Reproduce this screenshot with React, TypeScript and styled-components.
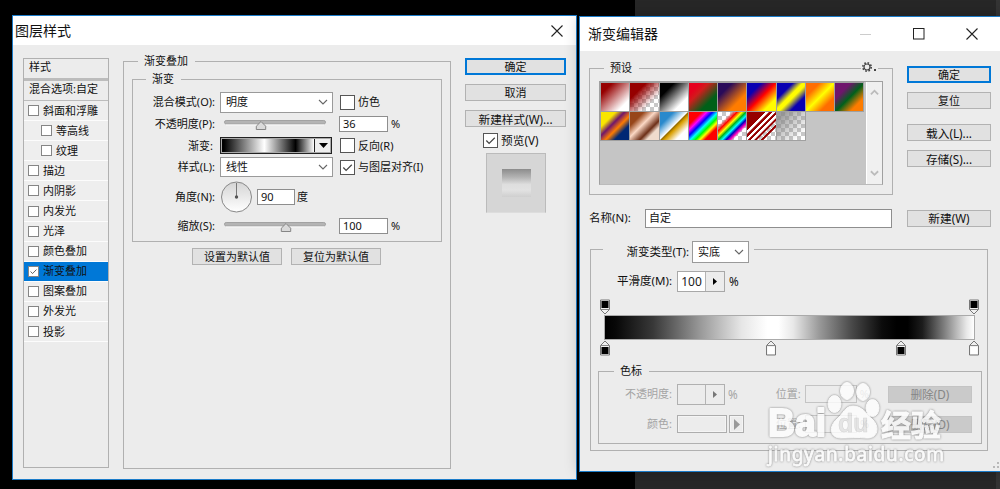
import React from 'react';
import styled, { createGlobalStyle, css } from 'styled-components';

const Global = createGlobalStyle`
  * { box-sizing: border-box; }
  body { margin: 0; background: #000; }
`;

const Desktop = styled.main`
  position: relative;
  width: 1000px;
  height: 489px;
  overflow: hidden;
  background: linear-gradient(90deg, #000 635px, #272727 635px, #272727 996px, #343434 996px);
  font: 11px/14px 'Noto Sans', 'Noto Sans CJK SC', sans-serif;
  color: #111;
  white-space: nowrap;
`;

const Window = styled.section<{ $x: number; $y: number; $w: number; $h: number }>`
  position: absolute;
  left: ${p => p.$x}px;
  top: ${p => p.$y}px;
  width: ${p => p.$w}px;
  height: ${p => p.$h}px;
  border: 1px solid #1c7cc9;
  background: #ececec;
  box-shadow: 0 0 14px rgba(0, 0, 0, 0.22);
`;

const TitleBar = styled.header<{ $h: number }>`
  height: ${p => p.$h}px;
  display: flex;
  align-items: center;
  background: #fff;
`;

const Title = styled.h1<{ $indent: number }>`
  margin: 0;
  padding-left: ${p => p.$indent}px;
  flex: 1;
  font-size: 14px;
  line-height: 20px;
  font-weight: 400;
`;

const Body = styled.div`
  display: flex;
  align-items: flex-start;
`;

const Sidebar = styled.nav`
  width: 86px;
  height: 410px;
  margin: 13px 14px 0 10px;
  border: 1px solid #b0b0b0;
`;

const SideHead = styled.div<{ $double?: boolean }>`
  height: ${p => (p.$double ? 22 : 20)}px;
  padding-left: 5px;
  line-height: 15px;
  border-bottom: ${p => (p.$double ? '3px' : '1px')} solid #bcbcbc;
`;

const StyleItem = styled.div<{ $nested?: boolean; $active?: boolean }>`
  height: 20.1px;
  display: flex;
  align-items: center;
  gap: 4px;
  padding-left: ${p => (p.$nested ? 17 : 4)}px;
  background: ${p => (p.$active ? '#0078d7' : '#eee')};
  border-bottom: 1px solid #fcfcfc;
`;

const Check = styled.span<{ $size: number }>`
  width: ${p => p.$size}px;
  height: ${p => p.$size}px;
  flex: none;
  display: flex;
  border: 1px solid ${p => (p.$size > 12 ? '#555' : '#858585')};
  background: #fff;
  svg { width: 100%; height: 100%; }
`;

const Group = styled.fieldset<{ $w: number; $h: number }>`
  width: ${p => p.$w}px;
  height: ${p => p.$h}px;
  min-width: 0;
  margin: 0;
  padding: 0;
  border: 1px solid #b0b0b0;
`;

const Legend = styled.legend<{ $at: number }>`
  margin-left: ${p => p.$at}px;
  padding: 0 7px 0 6px;
  height: 14px;
  line-height: 14px;
`;

const StylePane = styled.div`
  margin-top: 9px;
`;

const Inner = styled.div`
  padding: 4px 0 0 8px;
`;

const Row = styled.div<{ $h: number }>`
  height: ${p => p.$h}px;
  display: flex;
  align-items: center;
`;

const Label = styled.span<{ $w: number; $gap?: number; $left?: boolean; $big?: boolean }>`
  width: ${p => p.$w}px;
  margin-right: ${p => p.$gap ?? 5}px;
  flex: none;
  display: flex;
  justify-content: ${p => (p.$left ? 'flex-start' : 'flex-end')};
  ${p => p.$big && css`font-size: 11.5px;`}
`;

const Rows = styled.div`
  padding-top: 5px;
`;

const Control = styled.div`
  width: 113px;
  flex: none;
  display: flex;
  align-items: center;
`;

const SelectBox = styled.div<{ $w: number; $h: number }>`
  width: ${p => p.$w}px;
  height: ${p => p.$h}px;
  display: flex;
  align-items: center;
  justify-content: space-between;
  padding: 0 4px 0 5px;
  border: 1px solid #9a9a9a;
  background: #fff;
`;

const Field = styled.div<{ $w: number; $h?: number; $faint?: boolean }>`
  width: ${p => p.$w}px;
  height: ${p => p.$h ?? 16}px;
  flex: none;
  display: flex;
  align-items: center;
  padding-left: 3px;
  border: 1px solid ${p => (p.$faint ? '#c4c4c4' : '#8e8e8e')};
  background: ${p => (p.$faint ? '#ececec' : '#fff')};
`;

const Unit = styled.span<{ $gap?: number }>`
  margin-left: ${p => p.$gap ?? 3}px;
`;

const CheckLabel = styled.label<{ $gap?: number }>`
  display: flex;
  align-items: center;
  gap: 3px;
  margin-left: ${p => p.$gap ?? 7}px;
`;

const GradientBox = styled.div`
  width: 112px;
  height: 17px;
  display: flex;
  border: 1px solid #222;
  outline: 1px solid #aaa;
  outline-offset: -2px;
  background: #eee;
`;

const GradientFill = styled.div`
  flex: 1;
  margin: 1px 0 1px 1px;
  background: linear-gradient(90deg, #000 2%, #fff 46%, #000 80%, #fff);
  border-right: 1px solid #222;
`;

const GradientArrow = styled.div`
  width: 16px;
  display: flex;
  align-items: center;
  justify-content: center;
`;

const Push = styled.button<{ $w: number; $top?: number; $primary?: boolean; $off?: boolean; $h?: number }>`
  width: ${p => p.$w}px;
  height: ${p => p.$h ?? 17}px;
  flex: none;
  margin: ${p => p.$top ?? 0}px 0 0;
  padding: 0;
  display: flex;
  align-items: center;
  justify-content: center;
  border: ${p => (p.$primary ? '2px solid #0078d7' : '1px solid #b2b2b2')};
  background: ${p => (p.$off ? '#cacaca' : '#e1e1e1')};
  ${p => p.$off && css`border-color: #c4c4c4;`}
  color: ${p => (p.$off ? '#858585' : '#111')};
  font: inherit;
  line-height: 12px;
`;

const ButtonPair = styled.div`
  display: flex;
  gap: 9px;
  margin: 6px 0 0 60px;
`;

const Actions = styled.aside`
  width: 101px;
  margin: 13px 0 0 14px;
  display: flex;
  flex-direction: column;
`;

const Wide = styled.span`
  font-size: 11.7px;
`;

const Thumb = styled.div`
  width: 60px;
  height: 60px;
  margin: 0 0 0 21px;
  display: flex;
  align-items: center;
  justify-content: center;
  border: 1px solid #bbb;
  border-bottom-color: #ddd;
  background: #d6d6d6;
`;

const ThumbFill = styled.div`
  width: 29px;
  height: 28px;
  background: linear-gradient(#8c8c8c, #b4b4b4 30%, #dedede 55%, #e2e2e2 75%, #cfcfcf);
`;

const Caption = styled.span<{ $w: number }>`
  width: ${p => p.$w}px;
  display: flex;
  justify-content: center;
`;

const EditorTop = styled.div`
  display: flex;
  padding: 10px 0 0 9px;
`;

const Gear = styled.div`
  width: 17px;
  margin: -14px 14px 0 auto;
  height: 14px;
  background: #ececec;
  display: flex;
`;

const Presets = styled.div`
  width: 284px;
  height: 104px;
  margin: 6px 0 0 9px;
  display: flex;
  justify-content: space-between;
  border: 1px solid #a0a0a0;
  border-bottom-color: #bbb;
  background: #c5c5c5;
`;

const Swatches = styled.div`
  display: grid;
  grid-template-columns: repeat(9, 28.25px);
  grid-auto-rows: 28.2px;
  gap: 1px;
  align-content: start;
  margin: 1px;
  height: 59px;
`;

const Swatch = styled.div<{ $fill: string }>`
  background: ${p => p.$fill}, repeating-conic-gradient(#c8c8c8 0 25%, #fff 0 50%) 0 0 / 8px 8px;
  box-shadow: 0 0 0 1px #a0a0a0;
`;

const ScrollBar = styled.div`
  width: 16px;
  display: flex;
  flex-direction: column;
  justify-content: space-between;
  align-items: center;
  padding: 7px 0;
  border-left: 1px solid #fff;
  background: #f0f0f0;
`;

const EditorActions = styled.div`
  width: 84px;
  margin: 5px 0 0 14px;
`;

const NameRow = styled.div`
  display: flex;
  align-items: center;
  height: 20px;
  margin: 13px 0 0 9px;
`;

const StopsPane = styled.div`
  margin: 7px 0 0 10px;
`;

const TypeLegend = styled.legend`
  height: 28px;
  margin-left: 12px;
  padding: 6px 5px 0 0;
  display: flex;
  align-items: center;
`;

const Stepper = styled.div<{ $off?: boolean }>`
  width: 48px;
  height: 21px;
  display: flex;
  border: 1px solid ${p => (p.$off ? '#b0b0b0' : '#a8a8a8')};
  background: ${p => (p.$off ? '#ececec' : '#fff')};
  font-size: 12px;
  line-height: 19px;
  color: #222;
`;

const StepValue = styled.span`
  width: 27px;
  text-align: center;
`;

const StepArrow = styled.span`
  flex: 1;
  display: flex;
  align-items: center;
  justify-content: center;
  border-left: 1px solid #b4b4b4;
  background: #ececec;
`;

const StopTrack = styled.div`
  height: 16px;
  position: relative;
  margin-left: 8px;
`;

const Pin = styled.svg<{ $at: number; $flip?: boolean }>`
  position: absolute;
  left: ${p => p.$at}px;
  top: 0;
  ${p => p.$flip && css`transform: scaleY(-1);`}
`;

const Ramp = styled.div`
  width: 371px;
  height: 25px;
  margin-left: 13px;
  border: 1px solid #aaa;
  background: linear-gradient(90deg, #000, #080808 3%, #383838 13%, #9a9a9a 26%, #e6e6e6 37%, #fff 44%, #fff 47%, #e8e8e8 51%, #9a9a9a 58%, #484848 67%, #0c0c0c 75%, #000 79%, #000 82%, #1c1c1c 86%, #808080 92%, #e8e8e8 98%, #fff);
`;

const StopGroup = styled.div`
  margin: 8px 0 0 7px;
`;

const Faint = styled.div`
  padding-top: 1px;
  color: #a4a4a4;
`;

const ColorBox = styled.div<{ $w: number; $gap?: number }>`
  width: ${p => p.$w}px;
  height: 18px;
  margin-right: ${p => p.$gap ?? 0}px;
  display: flex;
  align-items: center;
  justify-content: center;
  border: 1px solid #adadad;
  outline: 1px solid #f4f4f4;
  outline-offset: -2px;
`;

const Watermark = styled.div`
  position: absolute;
  left: 764px;
  top: 375px;
  width: 190px;
  height: 95px;
  opacity: 0.78;
  svg { filter: drop-shadow(0 0 0.9px #666); }
`;

const Grip = styled.svg`
  position: absolute;
  left: 991px;
  top: 461px;
`;

const Tick = () => (
  <svg viewBox="0 0 14 14"><path d="M2.5 7l3 3.2L11.6 4" fill="none" stroke="#444" strokeWidth="1.3" /></svg>
);

const CheckBox = ({ on, size = 15 }: { on?: boolean; size?: number }) => <Check $size={size}>{on && <Tick />}</Check>;

const Chevron = ({ up, color = '#666', w = 10 }: { up?: boolean; color?: string; w?: number }) => (
  <svg width={w} height="7" viewBox="0 0 10 7">
    <path d={up ? 'M1 5.5L5 1.5L9 5.5' : 'M1 1L5 5L9 1'} fill="none" stroke={color} strokeWidth={w < 10 ? 2 : 1.1} />
  </svg>
);

const Cross = () => (
  <svg width="12" height="12" viewBox="0 0 12 12"><path d="M.5 .5l11 11M11.5 .5l-11 11" stroke="#222" strokeWidth="1.1" /></svg>
);

const Play = ({ color = '#000', w = 4, h = 7 }: { color?: string; w?: number; h?: number }) => (
  <svg width={w} height={h} viewBox="0 0 4 7" preserveAspectRatio="none"><path d="M0 0L4 3.5L0 7Z" fill={color} /></svg>
);

const Slider = ({ at }: { at: number }) => (
  <svg width="113" height="16" viewBox="0 0 113 16">
    <rect x="4.5" y="4.5" width="101" height="3.5" rx="1.7" fill="#b4b4b4" stroke="#a2a2a2" />
    <path d="M6 9h98" stroke="#f8f8f8" />
    <path d={`M${at} 5.5L${at + 4.7} 10.2V13.5H${at - 4.7}V10.2Z`} fill="#dadada" stroke="#858585" />
  </svg>
);

const Dial = () => (
  <svg width="33" height="32" viewBox="0 0 33 32">
    <defs><linearGradient id="dial" x2="0" y2="1"><stop stopColor="#d4d4d4" /><stop offset="1" stopColor="#fff" /></linearGradient></defs>
    <circle cx="16.5" cy="16" r="15" fill="url(#dial)" stroke="#888" />
    <path d="M16.5 2v14" stroke="#777" />
    <circle cx="16.5" cy="16" r="1.7" fill="#555" />
  </svg>
);

const StopPin = ({ at, dark, flip }: { at: number; dark?: boolean; flip?: boolean }) => (
  <Pin $at={at} $flip={flip} width="12" height="16" viewBox="0 0 12 16">
    <path d="M6 1L10.5 5.5V15H1.5V5.5Z" fill="#f0f0f0" stroke="#777" />
    <path d="M2 5.5H10" stroke="#888" />
    <rect x="2.5" y="7" width="7" height="7" fill={dark ? '#000' : '#fff'} />
  </Pin>
);

const effects: { name: string; nested?: boolean; active?: boolean }[] = [
  { name: '斜面和浮雕' }, { name: '等高线', nested: true }, { name: '纹理', nested: true },
  { name: '描边' }, { name: '内阴影' }, { name: '内发光' }, { name: '光泽' }, { name: '颜色叠加' },
  { name: '渐变叠加', active: true }, { name: '图案叠加' }, { name: '外发光' }, { name: '投影' },
];

const presets = [
  'linear-gradient(135deg, #960000 20%, #fff 80%)',
  'linear-gradient(135deg, #960000 28%, #96000000 72%)',
  'linear-gradient(135deg, #000 25%, #fff 75%)',
  'linear-gradient(135deg, #e6001e 20%, #d01c1c 35%, #006018 70%)',
  'linear-gradient(135deg, #290a59 25%, #ff7c00 70%)',
  'linear-gradient(135deg, #0a00b2 25%, #f00 50%, #fffc00 78%)',
  'linear-gradient(135deg, #0a00b2 28%, #fffc00 46%, #fffc00 54%, #0a00b2 74%)',
  'linear-gradient(135deg, #ff6e02 24%, #ff0 50%, #ff6d00 76%)',
  'linear-gradient(135deg, #6f156c 28%, #00601b 52%, #fd7c00 78%)',
  'linear-gradient(135deg, #f9e600 26%, #6f156c 42%, #fd7c00 58%, #002874 74%)',
  'linear-gradient(135deg, #97461a 24%, #fbd8c5 44%, #6c2e16 66%, #efdbcd 78%)',
  'linear-gradient(135deg, #2989cc 24%, #fff 49%, #906a00 51%, #d99f00 57%, #fff 78%)',
  'linear-gradient(135deg, #f00 22%, #f0f 32%, #00f 42%, #0ff 52%, #0f0 61%, #ff0 69%, #f00 78%)',
  'linear-gradient(135deg, #fff0 24%, #f00 34%, #ff0 43%, #00b020 50%, #00ffff 57%, #0000c0 64%, #f0b 71%, #fff0 77%)',
  'linear-gradient(135deg, #960000 32%, #fff 33%, #fff 38%, #960000 39%, #960000 44%, #fff 45%, #fff 50%, #960000 51%, #960000 55%, #fff 56%, #fff 61%, #960000 62%, #960000 66%, #fff0 67%, #fff0 72%, #960000 73%, #960000 77%, #fff0 78%)',
  'linear-gradient(135deg, #888c 15%, #8880 85%)',
];

const StyleDialog = () => (
  <Window $x={12} $y={15} $w={565} $h={465}>
    <TitleBar $h={29}>
      <Title $indent={2}>图层样式</Title>
      <Caption $w={38}><Cross /></Caption>
    </TitleBar>
    <Body>
      <Sidebar>
        <SideHead $double>样式</SideHead>
        <SideHead>混合选项:自定</SideHead>
        {effects.map(e => (
          <StyleItem key={e.name} $nested={e.nested} $active={e.active}>
            <CheckBox size={11} on={e.active} />{e.name}
          </StyleItem>
        ))}
      </Sidebar>
      <StylePane>
        <Group $w={328} $h={415}>
          <Legend $at={14}>渐变叠加</Legend>
          <Inner>
            <Group $w={310} $h={170}>
              <Legend $at={13}>渐变</Legend>
              <Rows>
                <Row $h={22}>
                  <Label $w={82}>混合模式(O):</Label>
                  <Control><SelectBox $w={113} $h={21}>明度<Chevron /></SelectBox></Control>
                  <CheckLabel><CheckBox />仿色</CheckLabel>
                </Row>
                <Row $h={22}>
                  <Label $w={82}>不透明度(P):</Label>
                  <Control><Slider at={41} /></Control>
                  <Unit $gap={6} /><Field $w={49}>36</Field><Unit>%</Unit>
                </Row>
                <Row $h={21}>
                  <Label $w={80} $gap={7}>渐变:</Label>
                  <Control>
                    <GradientBox>
                      <GradientFill />
                      <GradientArrow><svg width="9" height="5"><path d="M0 0h9L4.500 5z" /></svg></GradientArrow>
                    </GradientBox>
                  </Control>
                  <CheckLabel><CheckBox />反向(R)</CheckLabel>
                </Row>
                <Row $h={22}>
                  <Label $w={82}>样式(L):</Label>
                  <Control><SelectBox $w={113} $h={20}>线性<Chevron /></SelectBox></Control>
                  <CheckLabel><CheckBox on />与图层对齐(I)</CheckLabel>
                </Row>
                <Row $h={38}>
                  <Label $w={82}>角度(N):</Label>
                  <Dial /><Unit $gap={4} /><Field $w={38}>90</Field><Unit $gap={2}>度</Unit>
                </Row>
                <Row $h={19}>
                  <Label $w={82}>缩放(S):</Label>
                  <Control><Slider at={66} /></Control>
                  <Unit $gap={6} /><Field $w={49}>100</Field><Unit>%</Unit>
                </Row>
              </Rows>
            </Group>
            <ButtonPair>
              <Push $w={90}>设置为默认值</Push>
              <Push $w={90}>复位为默认值</Push>
            </ButtonPair>
          </Inner>
        </Group>
      </StylePane>
      <Actions>
        <Push $w={101} $primary>确定</Push>
        <Push $w={101} $top={9}>取消</Push>
        <Push $w={101} $top={9}><Wide>新建样式(W)...</Wide></Push>
        <Row $h={26}>
          <CheckLabel $gap={18}><CheckBox on /><Wide>预览(V)</Wide></CheckLabel>
        </Row>
        <Thumb><ThumbFill /></Thumb>
      </Actions>
    </Body>
  </Window>
);

const StopRow = ({ label, children }: { label: string; children: React.ReactNode }) => (
  <Row $h={30}>
    <Label $w={73} $gap={5}>{label}</Label>
    {children}
  </Row>
);

const GradientEditor = () => (
  <Window $x={579} $y={16} $w={430} $h={456}>
    <TitleBar $h={34}>
      <Title $indent={8}>渐变编辑器</Title>
      <Caption $w={53}><svg width="11" height="1"><path d="M0 .5h11" stroke="#ccc" /></svg></Caption>
      <Caption $w={53}><svg width="12" height="12"><rect x=".5" y=".5" width="10.500" height="10.500" fill="none" stroke="#222" /></svg></Caption>
      <Caption $w={54}><Cross /></Caption>
      <Caption $w={9} />
    </TitleBar>
    <EditorTop>
      <Group $w={304} $h={134}>
        <Legend $at={14}>预设</Legend>
        <Gear>
          <svg width="17" height="14" viewBox="0 0 17 14">
            <circle cx="6" cy="6" r="3" fill="none" stroke="#444" strokeWidth="1.2" />
            <circle cx="6" cy="6" r="4.2" fill="none" stroke="#444" strokeWidth="1.6" strokeDasharray="1.65 1.65" />
            <rect x="13" y="8" width="2" height="2" fill="#444" />
          </svg>
        </Gear>
        <Presets>
          <Swatches>{presets.map(p => <Swatch key={p} $fill={p} />)}</Swatches>
          <ScrollBar><Chevron up color="#bbb" w={9} /><Chevron color="#bbb" w={9} /></ScrollBar>
        </Presets>
      </Group>
      <EditorActions>
        <Push $w={84} $primary>确定</Push>
        <Push $w={84} $top={9}>复位</Push>
        <Push $w={84} $top={15}><Wide>载入(L)...</Wide></Push>
        <Push $w={84} $top={9}><Wide>存储(S)...</Wide></Push>
      </EditorActions>
    </EditorTop>
    <NameRow>
      <Label $w={47} $gap={9} $left $big>名称(N):</Label>
      <Field $w={247} $h={19}>自定</Field>
      <Unit $gap={15} /><Push $w={84}><Wide>新建(W)</Wide></Push>
    </NameRow>
    <StopsPane>
      <Group $w={398} $h={216}>
        <TypeLegend>
          <Label $w={86} $gap={3} $big>渐变类型(T):</Label>
          <SelectBox $w={57} $h={22}>实底<Chevron /></SelectBox>
        </TypeLegend>
        <Row $h={36}>
          <Label $w={81} $gap={5} $big>平滑度(M):</Label>
          <Stepper><StepValue>100</StepValue><StepArrow><Play /></StepArrow></Stepper>
          <Unit $gap={4}><Wide>%</Wide></Unit>
        </Row>
        <StopTrack><StopPin at={0} dark flip /><StopPin at={369} dark flip /></StopTrack>
        <Ramp />
        <StopTrack><StopPin at={0} dark /><StopPin at={166} /><StopPin at={296} dark /><StopPin at={369} /></StopTrack>
        <StopGroup>
          <Group $w={384} $h={80}>
            <Legend $at={15}>色标</Legend>
            <Faint>
              <StopRow label="不透明度:">
                <Stepper $off><StepValue /><StepArrow><Play color="#777" /></StepArrow></Stepper>
                <Unit><Wide>%</Wide></Unit>
                <Label $w={63} $gap={4}>位置:</Label>
                <Field $w={52} $h={18} $faint /><Unit>%</Unit>
                <Unit $gap={19} /><Push $w={84} $off><Wide>删除(D)</Wide></Push>
              </StopRow>
              <StopRow label="颜色:">
                <ColorBox $w={50} $gap={2} /><ColorBox $w={15}><Play color="#999" w={6} h={11} /></ColorBox>
                <Label $w={57} $gap={4}>位置:</Label>
                <Field $w={52} $h={18} $faint /><Unit>%</Unit>
                <Unit $gap={19} /><Push $w={84} $off><Wide>删除(D)</Wide></Push>
              </StopRow>
            </Faint>
          </Group>
        </StopGroup>
      </Group>
    </StopsPane>
  </Window>
);

const BaiduMark = () => (
  <Watermark>
    <svg width="190" height="95" viewBox="0 0 190 95" fill="#fff" stroke="#fff" strokeLinejoin="round">
      <text x="4" y="61" fontFamily="'Liberation Sans'" fontWeight="700" fontSize="38" strokeWidth="2" textLength="58" lengthAdjust="spacingAndGlyphs">Bai</text>
      <ellipse cx="70.500" cy="29" rx="6.500" ry="8.500" />
      <ellipse cx="83" cy="16" rx="6.500" ry="8.500" />
      <ellipse cx="99" cy="17" rx="6.500" ry="8.500" />
      <ellipse cx="108.500" cy="33" rx="6.500" ry="8.500" />
      <path d="M89 31c-8 0-10 8-16 13-9 8-7 19 4 19 8 0 18-1 25 0 12 1 14-11 7-18-6-6-11-14-20-14z" />
      <text x="74" y="57" fontFamily="'Liberation Sans'" fontWeight="700" fontSize="25" fill="#e4e4e4" stroke="#d0d0d0" strokeWidth=".6">du</text>
      <text x="117" y="61" fontFamily="'Noto Sans CJK SC'" fontWeight="700" fontSize="30" strokeWidth="1">经验</text>
      <text x="4" y="86" fontFamily="'Noto Sans'" fontSize="19" strokeWidth=".8" textLength="176">jingyan.baidu.com</text>
    </svg>
  </Watermark>
);

export default function App() {
  return (
    <Desktop>
      <Global />
      <StyleDialog />
      <GradientEditor />
      <BaiduMark />
      <Grip width="9" height="10" fill="#b8b8b8"><path d="M6 1h2v2h-2zM6 5h2v2h-2zM2 5h2v2h-2z" /></Grip>
    </Desktop>
  );
}
